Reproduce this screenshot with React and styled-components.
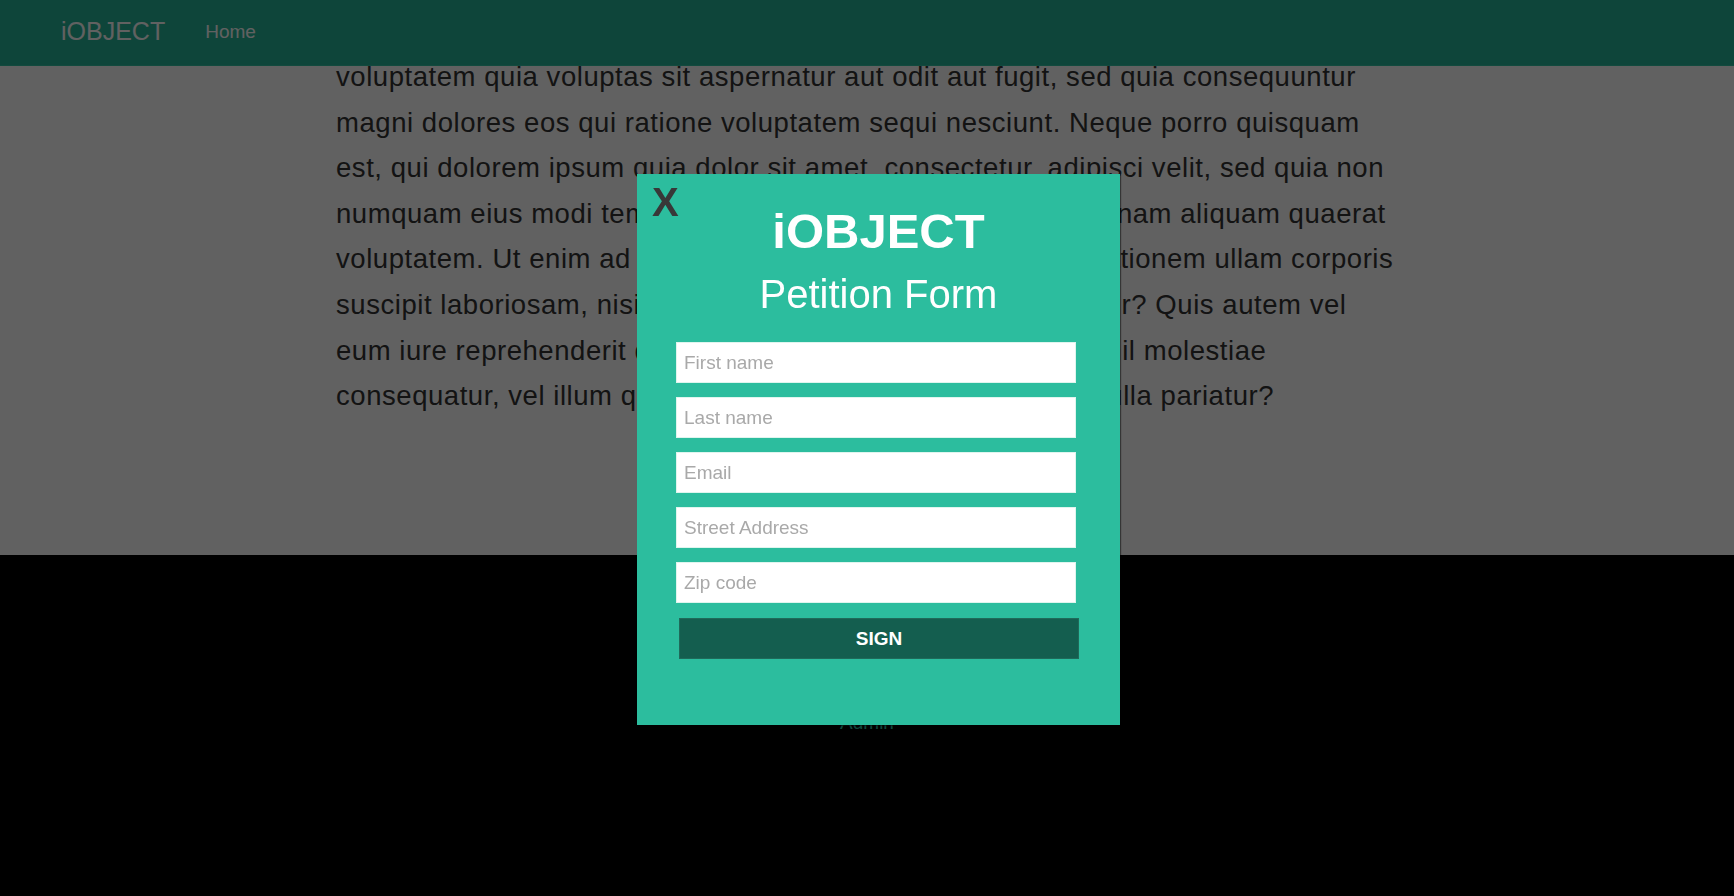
import React from 'react';
import styled, { createGlobalStyle } from 'styled-components';

const COLORS = {
  teal: '#2cbd9e',
  navTeal: '#25b69a',
  darkTeal: '#145e4f',
  text: '#333',
  overlay: 'rgba(0, 0, 0, 0.62)',
};

const GlobalStyle = createGlobalStyle`
  html, body {
    margin: 0;
    padding: 0;
    background: #000;
  }
  body {
    font-family: "Liberation Sans", Helvetica, Arial, sans-serif;
    overflow: hidden;
  }
  * { box-sizing: border-box; }
`;

const LINES = [
  'voluptatem quia voluptas sit aspernatur aut odit aut fugit, sed quia consequuntur',
  'magni dolores eos qui ratione voluptatem sequi nesciunt. Neque porro quisquam',
  'est, qui dolorem ipsum quia dolor sit amet, consectetur, adipisci velit, sed quia non',
  'numquam eius modi tempora incidunt ut labore et dolore magnam aliquam quaerat',
  'voluptatem. Ut enim ad minima veniam, quis nostrum exercitationem ullam corporis',
  'suscipit laboriosam, nisi ut aliquid ex ea commodi consequatur? Quis autem vel',
  'eum iure reprehenderit qui in ea voluptate velit esse quam nihil molestiae',
  'consequatur, vel illum qui dolorem eum fugiat quo voluptas nulla pariatur?',
];

const FIELDS = ['First name', 'Last name', 'Email', 'Street Address', 'Zip code'];

const App = () => {
  return (
    <Page>
      <GlobalStyle />
      <NavBar>
        <Brand href="#">iOBJECT</Brand>
        <NavLink href="#">Home</NavLink>
      </NavBar>

      <Main>
        <Container>
          <Text>
            {LINES.map((line) => (
              <Line key={line}>{line}</Line>
            ))}
          </Text>
        </Container>
      </Main>

      <Footer>
        <FooterLink href="#">Admin</FooterLink>
      </Footer>

      <Overlay />

      <Modal>
        <Close type="button">X</Close>
        <Title>iOBJECT</Title>
        <Subtitle>Petition Form</Subtitle>
        <Form onSubmit={(e) => e.preventDefault()}>
          {FIELDS.map((f) => (
            <Input key={f} type="text" placeholder={f} />
          ))}
          <SignButton type="submit">SIGN</SignButton>
        </Form>
      </Modal>
    </Page>
  );
};

const Page = styled.div`
  min-height: 896px;
  display: flex;
  flex-direction: column;
`;

const NavBar = styled.nav`
  position: fixed;
  top: 0;
  left: 0;
  right: 0;
  height: 66px;
  background: ${COLORS.navTeal};
  border-bottom: 1px solid #30c2a4;
  display: flex;
  align-items: center;
  padding: 0 0 2px 61px;
  gap: 40px;
  z-index: 10;
`;

const Brand = styled.a`
  color: #fff;
  font-size: 25px;
  text-decoration: none;
`;

const NavLink = styled.a`
  color: #fff;
  font-size: 19px;
  text-decoration: none;
  padding-top: 1px;
`;

const Main = styled.main`
  background: #fff;
  padding: 54px 0 140px;
  height: 555px;
`;

const Container = styled.div`
  width: 1062px;
  margin: 0 auto;
`;

const Text = styled.p`
  margin: 0;
  color: ${COLORS.text};
  font-size: 27.5px;
  letter-spacing: 0.55px;
  line-height: 45.6px;
`;

const Line = styled.span`
  display: block;
  white-space: nowrap;
`;

const Footer = styled.footer`
  flex: 1;
  background: #000;
  display: flex;
  justify-content: center;
  padding-top: 157px;
  height: 341px;
`;

const FooterLink = styled.a`
  color: ${COLORS.teal};
  font-size: 19px;
  text-decoration: none;
  height: 22px;
`;

const Overlay = styled.div`
  position: fixed;
  inset: 0;
  background: ${COLORS.overlay};
  z-index: 20;
`;

const Modal = styled.div`
  position: fixed;
  top: 174px;
  left: 637px;
  width: 483px;
  height: 551px;
  background: ${COLORS.teal};
  box-shadow: 1px 1px 1px rgba(0, 0, 0, 0.45);
  z-index: 30;
  display: flex;
  flex-direction: column;
  align-items: center;
  padding-top: 29px;
`;

const Close = styled.button`
  position: absolute;
  top: 8px;
  left: 15px;
  background: none;
  border: none;
  padding: 0;
  margin: 0;
  font-family: inherit;
  font-size: 40px;
  line-height: 40px;
  font-weight: 700;
  color: #383838;
  cursor: pointer;
`;

const Title = styled.h1`
  margin: 0;
  color: #fff;
  font-size: 49px;
  line-height: 56px;
  font-weight: 700;
`;

const Subtitle = styled.h2`
  margin: 12px 0 0;
  color: #fff;
  font-size: 40px;
  line-height: 46px;
  font-weight: 400;
`;

const Form = styled.form`
  align-self: stretch;
  display: flex;
  flex-direction: column;
  gap: 14px;
  padding: 25px 0 0 39px;
`;

const Input = styled.input`
  width: 400px;
  height: 41px;
  border: 1px solid #dff5ee;
  background: #fff;
  padding: 0 7px;
  font-family: inherit;
  font-size: 19px;
  color: #333;
  outline: none;

  &::placeholder {
    color: #a9a9a9;
  }
`;

const SignButton = styled.button`
  width: 400px;
  height: 41px;
  margin: 1px 0 0 3px;
  background: ${COLORS.darkTeal};
  border: 1px solid #1f6a5a;
  color: #fff;
  font-family: inherit;
  font-size: 19px;
  font-weight: 700;
  cursor: pointer;
`;

export default App;
